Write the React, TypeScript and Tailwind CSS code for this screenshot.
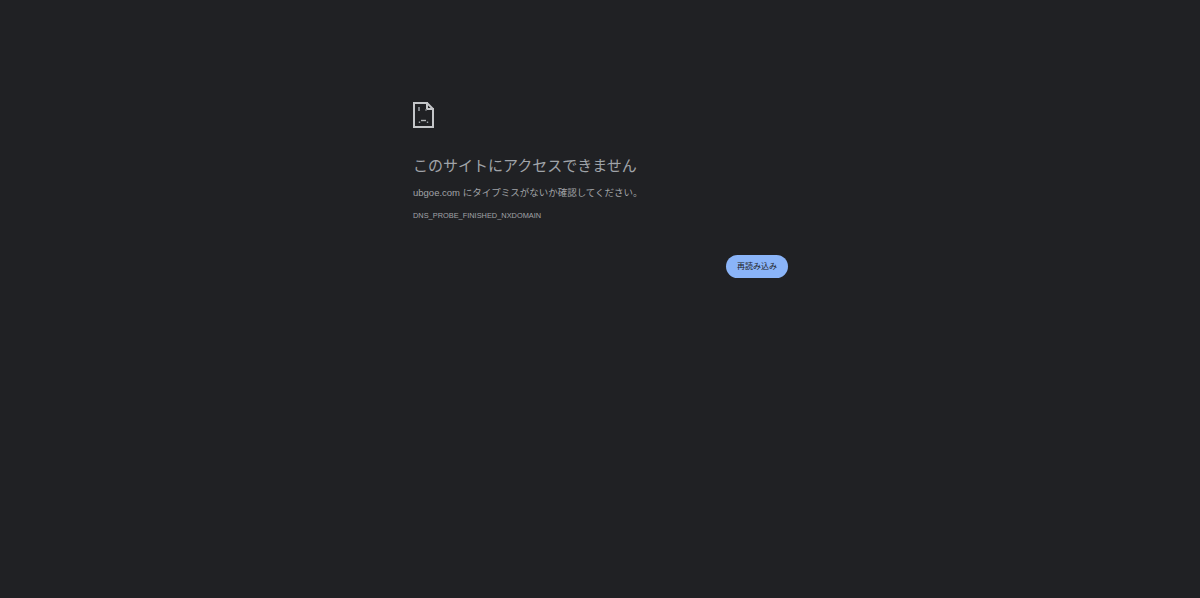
export default function App() {
  return (
    <div
      className="h-[598px] w-full overflow-hidden bg-[#202124] text-[#a2a4a8]"
      style={{ fontFamily: '"Liberation Sans", "Noto Sans CJK JP", sans-serif' }}
    >
      <div className="ml-[413px] flex w-[375px] flex-col pt-[102px]">
        {/* sad page icon */}
        <svg width="21" height="26" viewBox="0 0 21 26" fill="none" className="block">
          <path d="M1 1H14V7H20V25H1Z" stroke="#c4c6c9" strokeWidth="2" />
          <path d="M14 1L20 7" stroke="#c4c6c9" strokeWidth="2" />
          <path d="M6 5V9" stroke="#9aa0a6" strokeWidth="1.5" />
          <path d="M13 7V9" stroke="#6f7276" strokeWidth="1.5" />
          <path d="M8 18.5H13" stroke="#b4b6b9" strokeWidth="1.4" />
          <path d="M6.5 21V19.5M14.5 21V19.5" stroke="#9aa0a6" strokeWidth="1.4" />
        </svg>

        <h1 className="mt-[28px] text-[15px] leading-[20px] text-[#a0a4a9]">
          このサイトにアクセスできません
        </h1>
        <p className="mt-[9px] text-[9.5px] leading-[16px]">
          ubgoe.com にタイプミスがないか確認してください。
        </p>
        <div className="mt-[9px] text-[7.4px] leading-[12px]">
          DNS_PROBE_FINISHED_NXDOMAIN
        </div>

        <div className="mt-[33px] flex justify-end">
          <button className="h-[23px] w-[62px] rounded-full bg-[#8ab4f8] text-[8px] text-[#202124]">
            再読み込み
          </button>
        </div>
      </div>
    </div>
  );
}
